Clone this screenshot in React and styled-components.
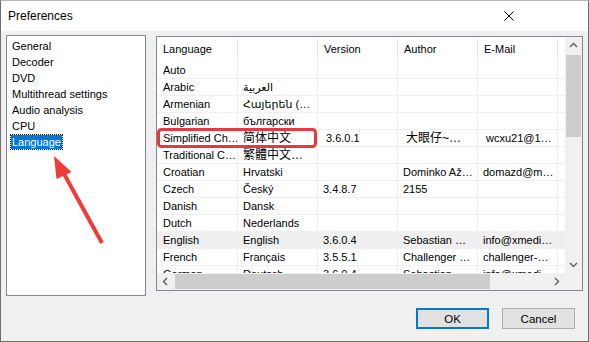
import React from "react";
import styled, { createGlobalStyle } from "styled-components";

const Global = createGlobalStyle`
  html, body { margin: 0; padding: 0; background: #f0f0f0; }
  body { font-family: "Liberation Sans", "Noto Sans CJK SC", "DejaVu Sans", sans-serif; }
`;

const FONT = `"Liberation Sans", "DejaVu Sans", "Noto Sans CJK SC", sans-serif`;

const Dialog = styled.div`
  position: relative;
  width: 589px;
  height: 342px;
  box-sizing: border-box;
  border: 1px solid #707070;
  border-top-color: #b8b8b8;
  background: #f0f0f0;
  display: flex;
  flex-direction: column;
  font-family: ${FONT};
  font-size: 11px;
  color: #000;
  overflow: hidden;
`;

const TitleBar = styled.div`
  height: 30px;
  flex: none;
  background: #fff;
  display: flex;
  align-items: center;
  justify-content: space-between;
  padding-left: 7px;
`;

const Title = styled.span`
  font-size: 12px;
  color: #000;
`;

const CloseIcon = styled.svg`
  width: 10px;
  height: 10px;
  margin-right: 74px;
  margin-top: 0px;
`;

const Body = styled.div`
  flex: 1;
  display: flex;
  flex-direction: column;
  padding: 4px 5px 0 5px;
`;

const Panels = styled.div`
  display: flex;
  gap: 10px;
  align-items: flex-start;
`;

const NavPanel = styled.div`
  width: 140px;
  height: 261px;
  box-sizing: border-box;
  border: 1px solid #828790;
  background: #fff;
  padding: 2px 0 0 4px;
`;

const NavItem = styled.div`
  height: 16px;
`;

const NavLabel = styled.span`
  display: inline-block;
  height: 14px;
  line-height: 14px;
  margin-top: 1px;
  padding: 0 1px;
  vertical-align: top;
  white-space: nowrap;
  background: ${(p) => (p.$selected ? "#0078d7" : "transparent")};
  color: ${(p) => (p.$selected ? "#fff" : "#000")};
  outline: ${(p) => (p.$selected ? "1px dotted #1a1a1a" : "none")};
`;

const ListView = styled.div`
  width: 427px;
  height: 255px;
  margin-top: 1px;
  box-sizing: border-box;
  border: 1px solid #828790;
  background: #fff;
  display: grid;
  grid-template-columns: 408px 17px;
  grid-template-rows: 236px 17px;
`;

const Content = styled.div`
  overflow: hidden;
  position: relative;
`;

const HeaderRow = styled.div`
  height: 25px;
  display: flex;
  padding-top: 1px;
  box-sizing: border-box;
`;

const HeaderCell = styled.div`
  width: ${(p) => p.$w}px;
  flex: none;
  box-sizing: border-box;
  height: 23px;
  line-height: 23px;
  padding-left: 6px;
  border-right: 1px solid #e5e5e5;
  white-space: nowrap;
  overflow: hidden;
`;

const Row = styled.div`
  height: 17px;
  box-sizing: border-box;
  display: flex;
  border-bottom: 1px solid #efefef;
  background: ${(p) => (p.$hover ? "#efefef" : "transparent")};
`;

const Cell = styled.div`
  width: ${(p) => p.$w}px;
  flex: none;
  box-sizing: border-box;
  height: 16px;
  line-height: 17px;
  padding-left: ${(p) => p.$pad}px;
  border-right: 1px solid #efefef;
  white-space: nowrap;
  overflow: hidden;
  font-size: ${(p) => (p.$cjk ? "12px" : "11px")};
`;

const VScroll = styled.div`
  background: #f0f0f0;
  display: flex;
  flex-direction: column;
`;

const HScroll = styled.div`
  background: #f0f0f0;
  display: flex;
  align-items: center;
`;

const Corner = styled.div`
  background: #f0f0f0;
`;

const ArrowBtn = styled.div`
  width: 17px;
  height: 17px;
  flex: none;
  display: flex;
  align-items: center;
  justify-content: center;
`;

const VThumb = styled.div`
  height: 82px;
  margin: 1px 1px 0 1px;
  background: #cdcdcd;
  flex: none;
`;

const HThumb = styled.div`
  width: 315px;
  height: 15px;
  margin-left: 1px;
  background: #cdcdcd;
  flex: none;
`;

const Spacer = styled.div`
  flex: 1;
`;

const ButtonRow = styled.div`
  display: flex;
  justify-content: flex-end;
  gap: 13px;
  margin-top: 12px;
  padding-right: 8px;
`;

const Button = styled.button`
  width: 73px;
  height: 21px;
  box-sizing: border-box;
  background: #e1e1e1;
  border: ${(p) => (p.$default ? "2px solid #0078d7" : "1px solid #adadad")};
  font-family: ${FONT};
  font-size: 11.5px;
  color: #000;
  padding: 0;
  margin: 0;
`;

const Overlay = styled.svg`
  position: absolute;
  left: -1px;
  top: -1px;
  width: 589px;
  height: 342px;
  pointer-events: none;
`;

const Chevron = ({ dir }) => {
  const rot = { up: 0, down: 180, left: -90, right: 90 }[dir];
  return (
    <svg width="9" height="9" viewBox="0 0 9 9">
      <polyline
        points="1,6 4.5,2.5 8,6"
        fill="none"
        stroke="#606060"
        strokeWidth="1.4"
        transform={`rotate(${rot} 4.5 4.5)`}
      />
    </svg>
  );
};

const widths = [81, 80, 80, 80, 80];
const headers = ["Language", "", "Version", "Author", "E-Mail"];

const rows = [
  ["Auto", "", "", "", ""],
  ["Arabic", "العربية", "", "", ""],
  ["Armenian", "Հայերեն (…", "", "", ""],
  ["Bulgarian", "български", "", "", ""],
  ["Simplified Ch…", "简体中文", "3.6.0.1", "大眼仔~…", "wcxu21@1…"],
  ["Traditional C…", "繁體中文…", "", "", ""],
  ["Croatian", "Hrvatski", "", "Dominko Až…", "domazd@m…"],
  ["Czech", "Český", "3.4.8.7", "2155", ""],
  ["Danish", "Dansk", "", "", ""],
  ["Dutch", "Nederlands", "", "", ""],
  ["English", "English", "3.6.0.4", "Sebastian …", "info@xmedi…"],
  ["French", "Français", "3.5.5.1", "Challenger …", "challenger-…"],
  ["German", "Deutsch", "3.6.0.4", "Sebastian …", "info@xmedi…"],
];

const nav = ["General", "Decoder", "DVD", "Multithread settings", "Audio analysis", "CPU", "Language"];

export default function App() {
  return (
    <>
      <Global />
      <Dialog>
        <TitleBar>
          <Title>Preferences</Title>
          <CloseIcon viewBox="0 0 10 10">
            <path d="M0.5 0.5 L9.5 9.5 M9.5 0.5 L0.5 9.5" stroke="#000" strokeWidth="1" />
          </CloseIcon>
        </TitleBar>
        <Body>
          <Panels>
            <NavPanel>
              {nav.map((n) => (
                <NavItem key={n}>
                  <NavLabel $selected={n === "Language"}>{n}</NavLabel>
                </NavItem>
              ))}
            </NavPanel>
            <ListView>
              <Content>
                <HeaderRow>
                  {headers.map((h, i) => (
                    <HeaderCell key={i} $w={widths[i]}>
                      {h}
                    </HeaderCell>
                  ))}
                </HeaderRow>
                {rows.map((r, ri) => (
                  <Row key={ri} $hover={r[0] === "English"}>
                    {r.map((c, ci) => (
                      <Cell
                        key={ci}
                        $w={widths[ci]}
                        $pad={ci === 0 ? 6 : ri === 4 && ci >= 2 ? 8 : 5}
                        $cjk={/[\u4e00-\u9fff]/.test(c)}
                      >
                        {c}
                      </Cell>
                    ))}
                  </Row>
                ))}
              </Content>
              <VScroll>
                <ArrowBtn>
                  <Chevron dir="up" />
                </ArrowBtn>
                <VThumb />
                <Spacer />
                <ArrowBtn>
                  <Chevron dir="down" />
                </ArrowBtn>
              </VScroll>
              <HScroll>
                <ArrowBtn>
                  <Chevron dir="left" />
                </ArrowBtn>
                <HThumb />
                <Spacer />
                <ArrowBtn>
                  <Chevron dir="right" />
                </ArrowBtn>
              </HScroll>
              <Corner />
            </ListView>
          </Panels>
          <ButtonRow>
            <Button $default>OK</Button>
            <Button>Cancel</Button>
          </ButtonRow>
        </Body>
        <Overlay viewBox="0 0 589 342">
          <rect x="158.5" y="129.5" width="157" height="17" rx="3" fill="none" stroke="#e5393d" strokeWidth="3" />
          <line x1="102" y1="243" x2="63" y2="172" stroke="#ee3b3b" strokeWidth="4" />
          <polygon points="54,156 56.5,179 71.5,172" fill="#ee3b3b" />
        </Overlay>
      </Dialog>
    </>
  );
}
